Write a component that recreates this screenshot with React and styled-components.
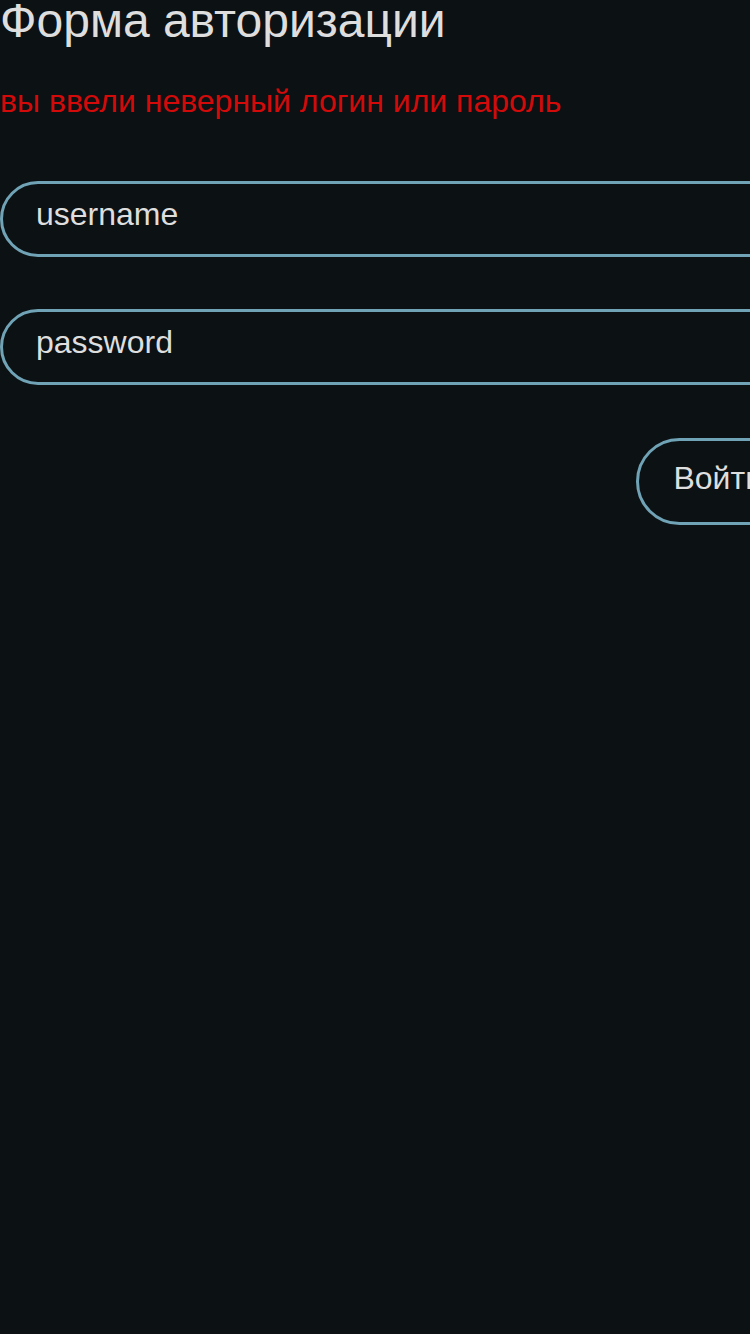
import React from "react";
import styled, { createGlobalStyle } from "styled-components";

const colors = {
  background: "#0c1114",
  text: "#dedede",
  error: "#d20a0a",
  border: "#6fa3b5",
};

const GlobalStyle = createGlobalStyle`
  html, body {
    margin: 0;
    padding: 0;
    background: ${colors.background};
    overflow-x: hidden;
  }
  body {
    font-family: "Liberation Sans", Arial, sans-serif;
    color: ${colors.text};
  }
`;

const Page = styled.main`
  min-height: 1334px;
  width: 798px;
  background: ${colors.background};
`;

const Form = styled.form`
  display: flex;
  flex-direction: column;
`;

const Title = styled.h1`
  margin: 0;
  font-size: 48px;
  font-weight: 400;
  line-height: 41px;
  color: ${colors.text};
`;

const ErrorText = styled.p`
  margin: 42px 0 0;
  font-size: 32px;
  color: ${colors.error};
`;

const Input = styled.input`
  box-sizing: border-box;
  width: 100%;
  height: 76px;
  margin-top: ${({ $gap }) => $gap}px;
  padding: 0 32px 10px 33px;
  border: 3px solid ${colors.border};
  border-radius: 38px;
  background: transparent;
  font-family: "Liberation Sans", Arial, sans-serif;
  font-size: 32px;
  color: ${colors.text};
  outline: none;

  &::placeholder {
    color: ${colors.text};
    opacity: 1;
  }
`;

const Actions = styled.div`
  display: flex;
  justify-content: flex-end;
  margin-top: 53px;
`;

const Button = styled.button`
  box-sizing: border-box;
  padding: 19px 32px 25px 34px;
  border: 3px solid ${colors.border};
  border-radius: 44px;
  background: transparent;
  font-family: "Liberation Sans", Arial, sans-serif;
  font-size: 32px;
  color: ${colors.text};
  cursor: pointer;
`;

const App = () => {
  return (
    <>
      <GlobalStyle />
      <Page>
        <Form onSubmit={(e) => e.preventDefault()}>
          <Title>Форма авторизации</Title>
          <ErrorText>вы ввели неверный логин или пароль</ErrorText>
          <Input $gap={61} type="text" placeholder="username" />
          <Input $gap={52} type="password" placeholder="password" />
          <Actions>
            <Button type="submit">Войти</Button>
          </Actions>
        </Form>
      </Page>
    </>
  );
};

export default App;
